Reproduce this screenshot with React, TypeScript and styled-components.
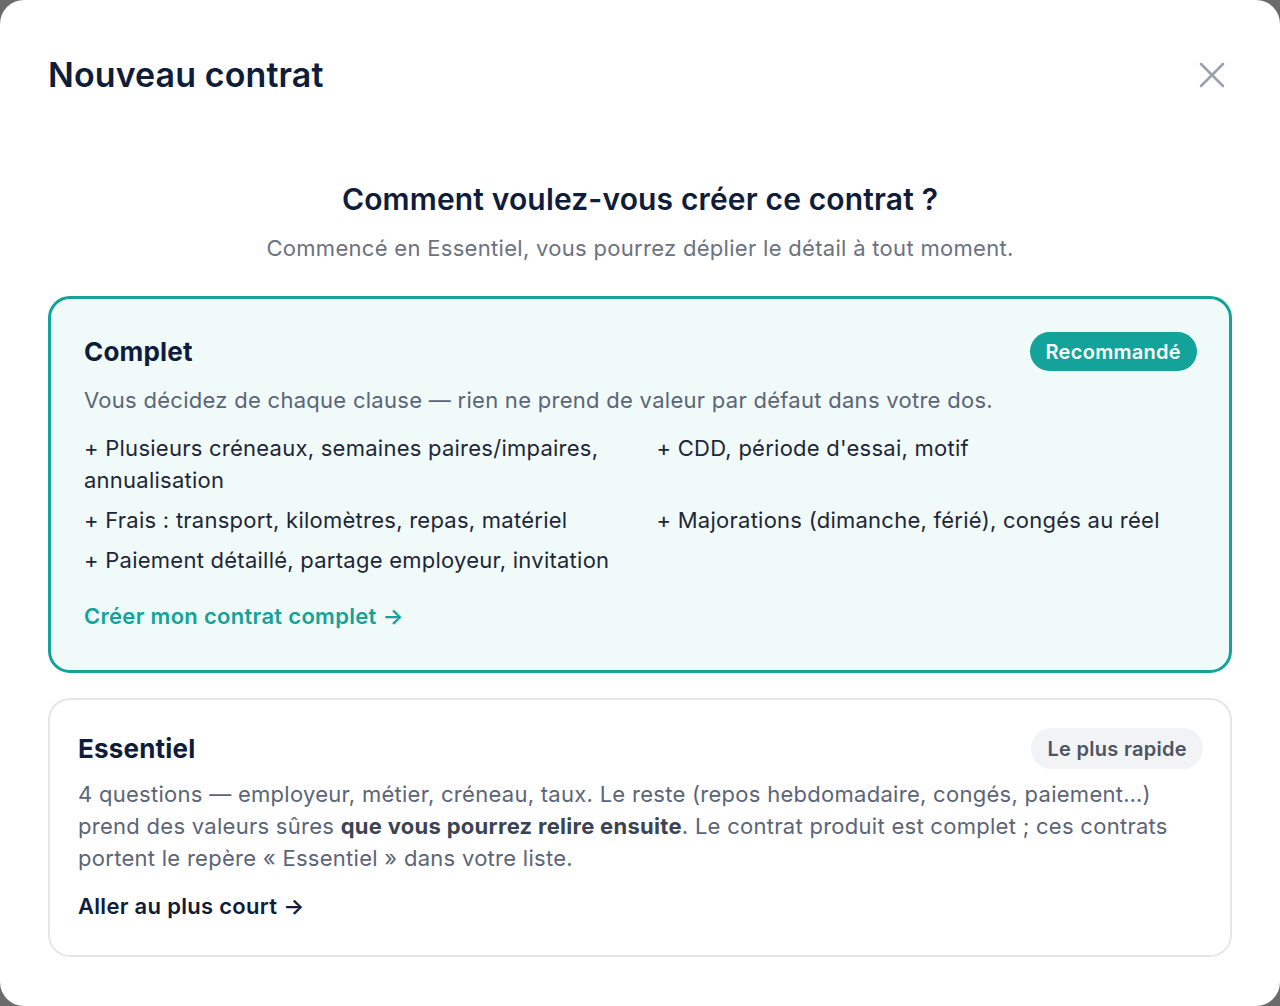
import React from 'react';
import styled, { createGlobalStyle } from 'styled-components';

const GlobalStyle = createGlobalStyle`
  html, body {
    margin: 0;
    padding: 0;
    background: #6b6b6b;
  }
  body {
    font-family: Inter, "Noto Sans", "Liberation Sans", sans-serif;
    color: #0f1c3a;
  }
`;

const Modal = styled.div`
  box-sizing: border-box;
  width: 1280px;
  height: 1006px;
  background: #ffffff;
  border-radius: 24px;
  padding: 52px 48px 0;
  display: flex;
  flex-direction: column;
`;

const Header = styled.header`
  display: flex;
  align-items: center;
  justify-content: space-between;
`;

const Title = styled.h1`
  margin: 0;
  font-size: 34px;
  line-height: 46px;
  font-weight: 600;
  color: #0f1c3a;
  letter-spacing: 0.1px;
`;

const CloseButton = styled.button`
  border: none;
  background: none;
  padding: 0;
  margin-right: 4px;
  width: 32px;
  height: 32px;
  display: flex;
  align-items: center;
  justify-content: center;
  cursor: pointer;
`;

const Intro = styled.div`
  margin-top: 81px;
  text-align: center;
`;

const Question = styled.h2`
  margin: 0;
  font-size: 30px;
  line-height: 40px;
  font-weight: 600;
  color: #0f1c3a;
  letter-spacing: 0.15px;
`;

const Hint = styled.p`
  margin: 14px 0 0;
  font-size: 22px;
  line-height: 30px;
  color: #6b7280;
  letter-spacing: 0.3px;
`;

const Card = styled.section<{ $accent?: boolean }>`
  box-sizing: border-box;
  margin-top: ${(p) => (p.$accent ? '33px' : '25px')};
  border: ${(p) => (p.$accent ? '3px solid #14a39a' : '2px solid #e4e6ea')};
  background: ${(p) => (p.$accent ? '#f0faf9' : '#ffffff')};
  border-radius: 22px;
  padding: ${(p) => (p.$accent ? '33px 32px 38px 33px' : '28px 27px 33px 28px')};
  display: flex;
  flex-direction: column;
`;

const CardHead = styled.div`
  display: flex;
  align-items: center;
  justify-content: space-between;
`;

const CardTitle = styled.h3`
  margin: 0;
  font-size: 26px;
  line-height: 36px;
  font-weight: 700;
  color: #0f1c3a;
  letter-spacing: 0.2px;
`;

const Badge = styled.span<{ $accent?: boolean }>`
  display: inline-flex;
  align-items: center;
  height: ${(p) => (p.$accent ? '39px' : '41px')};
  padding: 0 16px;
  border-radius: 999px;
  font-size: 20px;
  font-weight: 600;
  letter-spacing: 0.3px;
  background: ${(p) => (p.$accent ? '#14a39a' : '#f1f3f5')};
  color: ${(p) => (p.$accent ? '#ffffff' : '#4b5563')};
`;

const Text = styled.p<{ $gap: number }>`
  margin: ${(p) => p.$gap}px 0 0;
  font-size: 22px;
  line-height: 32px;
  letter-spacing: 0.28px;
  color: #5b6577;

  strong {
    font-weight: 700;
    color: #3b4454;
  }
`;

const Features = styled.ul`
  list-style: none;
  margin: 16px 0 0;
  padding: 0;
  display: grid;
  grid-template-columns: 1fr 1fr;
  column-gap: 32px;
  row-gap: 8px;
`;

const Feature = styled.li`
  font-size: 22px;
  line-height: 32px;
  letter-spacing: 0.25px;
  color: #1e2638;
`;

const Action = styled.a<{ $accent?: boolean; $gap: number }>`
  margin-top: ${(p) => p.$gap}px;
  font-size: 22px;
  line-height: 32px;
  font-weight: 600;
  letter-spacing: 0.3px;
  text-decoration: none;
  color: ${(p) => (p.$accent ? '#14a39a' : '#0f1c3a')};
  cursor: pointer;
  align-self: flex-start;
`;

const features = [
  '+ Plusieurs créneaux, semaines paires/impaires, annualisation',
  "+ CDD, période d'essai, motif",
  '+ Frais : transport, kilomètres, repas, matériel',
  '+ Majorations (dimanche, férié), congés au réel',
  '+ Paiement détaillé, partage employeur, invitation',
];

const App = () => (
  <>
    <GlobalStyle />
    <Modal>
      <Header>
        <Title>Nouveau contrat</Title>
        <CloseButton aria-label="Fermer">
          <svg width="26" height="26" viewBox="0 0 26 26" fill="none">
            <path
              d="M2 2L24 24M24 2L2 24"
              stroke="#9aa1ad"
              strokeWidth="2.6"
              strokeLinecap="round"
            />
          </svg>
        </CloseButton>
      </Header>

      <Intro>
        <Question>Comment voulez-vous créer ce contrat ?</Question>
        <Hint>Commencé en Essentiel, vous pourrez déplier le détail à tout moment.</Hint>
      </Intro>

      <Card $accent>
        <CardHead>
          <CardTitle>Complet</CardTitle>
          <Badge $accent>Recommandé</Badge>
        </CardHead>
        <Text $gap={13}>
          Vous décidez de chaque clause — rien ne prend de valeur par défaut dans votre dos.
        </Text>
        <Features>
          {features.map((f) => (
            <Feature key={f}>{f}</Feature>
          ))}
        </Features>
        <Action $accent $gap={24}>
          Créer mon contrat complet →
        </Action>
      </Card>

      <Card>
        <CardHead>
          <CardTitle>Essentiel</CardTitle>
          <Badge>Le plus rapide</Badge>
        </CardHead>
        <Text $gap={9}>
          4 questions — employeur, métier, créneau, taux. Le reste (repos hebdomadaire, congés,
          paiement…) prend des valeurs sûres <strong>que vous pourrez relire ensuite</strong>. Le
          contrat produit est complet ; ces contrats portent le repère « Essentiel » dans votre
          liste.
        </Text>
        <Action $gap={16}>Aller au plus court →</Action>
      </Card>
    </Modal>
  </>
);

export default App;
